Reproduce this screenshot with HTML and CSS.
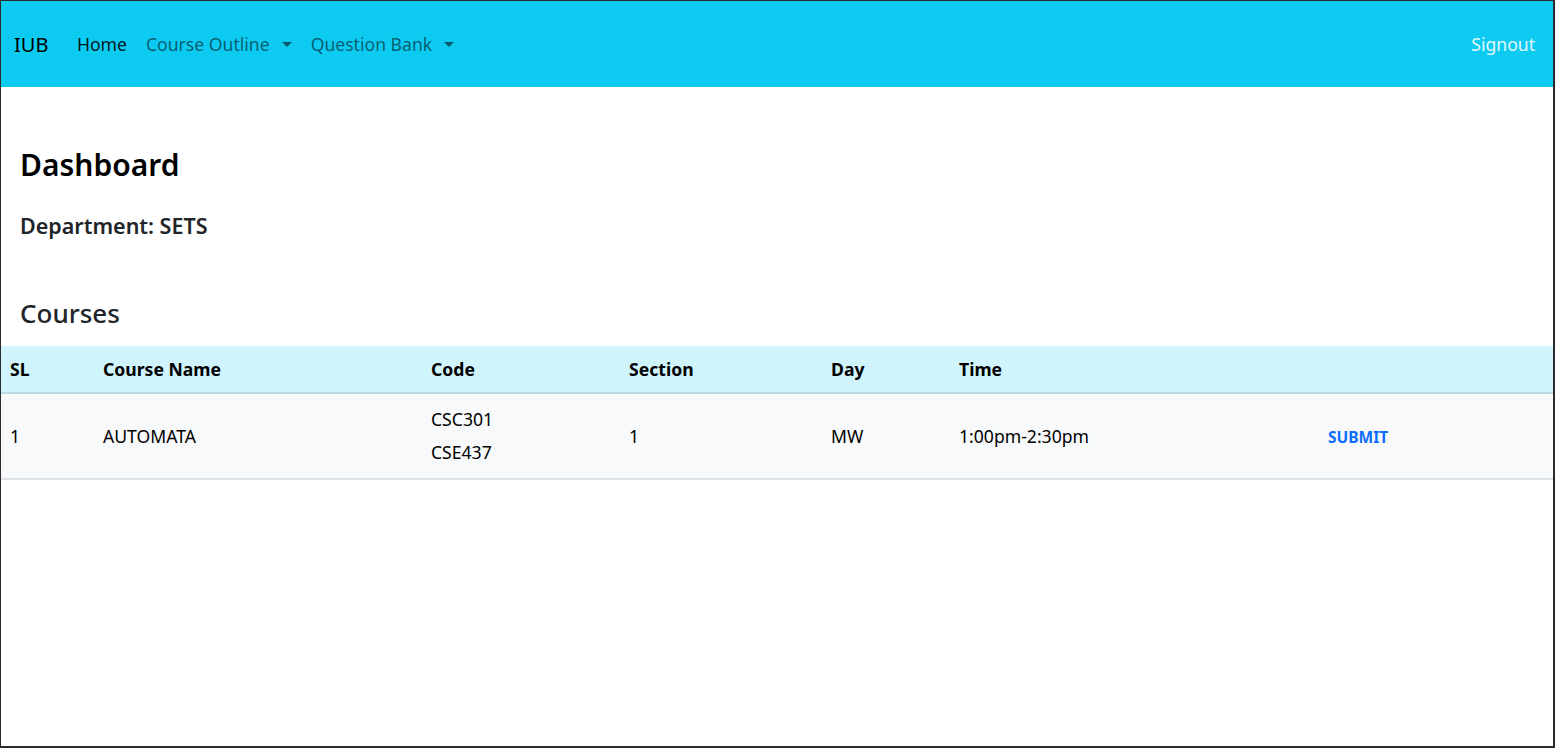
FILE: index.html
```html
<!DOCTYPE html>
<html lang="en">
<head>
<meta charset="utf-8">
<title>IUB Dashboard</title>
<link rel="stylesheet" href="styles.css">
</head>
<body>
<div class="frame">
  <nav class="navbar">
    <div class="nav-left">
      <a class="brand">IUB</a>
      <a class="nav-link active">Home</a>
      <a class="nav-link dropdown">Course Outline</a>
      <a class="nav-link dropdown">Question Bank</a>
    </div>
    <a class="signout">Signout</a>
  </nav>
  <main class="content">
    <h2 class="title">Dashboard</h2>
    <h5 class="dept">Department: SETS</h5>
    <h3 class="courses">Courses</h3>
  </main>
  <table class="table">
    <colgroup>
      <col class="c-sl"><col class="c-name"><col class="c-code"><col class="c-sec"><col class="c-day"><col class="c-time"><col class="c-act">
    </colgroup>
    <thead>
      <tr>
        <th>SL</th><th>Course Name</th><th>Code</th><th>Section</th><th>Day</th><th>Time</th><th></th>
      </tr>
    </thead>
    <tbody>
      <tr>
        <td>1</td>
        <td>AUTOMATA</td>
        <td class="codes"><div>CSC301</div><div>CSE437</div></td>
        <td>1</td>
        <td>MW</td>
        <td>1:00pm-2:30pm</td>
        <td><button class="btn-submit">SUBMIT</button></td>
      </tr>
    </tbody>
  </table>
</div>
</body>
</html>
```
FILE: styles.css
```css
* { box-sizing: border-box; }
html, body { margin: 0; padding: 0; }
body {
  font-family: "Noto Sans", "Open Sans", sans-serif;
  color: #212529;
  background: #fff;
}
.frame {
  width: 1555px;
  height: 748px;
  border: 1px solid #2b2b2b;
  border-width: 1px 2px 2px 1px;
  overflow: hidden;
}
.navbar {
  height: 86px;
  background: #0dcaf0;
  display: flex;
  align-items: center;
  justify-content: space-between;
  padding: 0 18px 0 13px;
}
.nav-left { display: flex; align-items: center; }
.brand {
  font-size: 20px;
  color: #000;
  margin-right: 19px;
}
.nav-link {
  font-size: 17.6px;
  color: rgba(0,0,0,.55);
  padding: 0 9.5px;
}
.nav-link.active { color: rgba(0,0,0,.9); }
.dropdown::after {
  content: "";
  display: inline-block;
  margin-left: 12px;
  vertical-align: 4px;
  border-top: 5px solid;
  border-left: 5px solid transparent;
  border-right: 5px solid transparent;
}
.signout {
  font-size: 17.6px;
  color: rgba(255,255,255,.9);
}
.content { padding: 0 19px; }
.title {
  margin: 60px 0 0;
  font-size: 30px;
  line-height: 36px;
  font-weight: 600;
  color: #000;
}
.dept {
  margin: 31px 0 0;
  font-size: 21.5px;
  line-height: 24px;
  font-weight: 600;
}
.courses {
  margin: 59px 0 17px;
  font-size: 26px;
  line-height: 32px;
  font-weight: 500;
}
.table {
  width: 100%;
  border-collapse: collapse;
  table-layout: fixed;
  font-size: 17.6px;
  color: #000;
}
.c-sl { width: 93px; }
.c-name { width: 328px; }
.c-code { width: 198px; }
.c-sec { width: 202px; }
.c-day { width: 128px; }
.c-time { width: 357px; }
th {
  text-align: left;
  font-weight: 700;
  background: #cff4fc;
  padding: 11px 8px 11px 9px;
  line-height: 24px;
  border-bottom: 2px solid #b6dce3;
}
td {
  background: #f8f9fa;
  padding: 13px 8px 14px 9px;
  line-height: 24px;
  vertical-align: middle;
  border-bottom: 2px solid #dee2e6;
}
.codes div + div { margin-top: 9px; }
.btn-submit {
  font-family: inherit;
  font-size: 15.5px;
  font-weight: 700;
  color: #0d6efd;
  background: transparent;
  border: 0;
  padding: 6px 12px 4px;
  line-height: 20px;
}
```
